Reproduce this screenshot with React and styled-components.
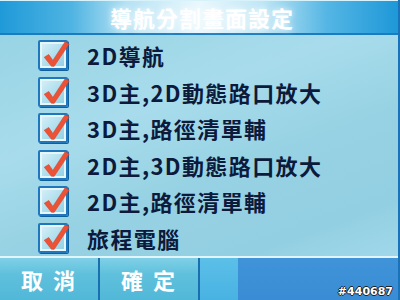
import React from "react";
import styled, { createGlobalStyle } from "styled-components";

const Global = createGlobalStyle`
  html, body { margin: 0; padding: 0; width: 400px; height: 300px; overflow: hidden; background: #3a8fd4; }
  * { box-sizing: border-box; }
`;

const Screen = styled.div`
  width: 400px;
  height: 300px;
  display: flex;
  flex-direction: column;
  border-right: 2px solid #1a72b8;
  font-family: "Noto Sans CJK TC", "Noto Sans CJK SC", sans-serif;
`;

const TitleBar = styled.div`
  height: 35px;
  flex: none;
  display: flex;
  align-items: center;
  justify-content: center;
  color: #ffffff;
  font-size: 22px;
  font-weight: 700;
  letter-spacing: 1px;
  padding-left: 6px;
  border-top: 1px solid #d8f2fb;
  border-bottom: 2px solid #1a7cc0;
  background: linear-gradient(
    90deg,
    #1f9ad8 0%,
    #4fb4e2 18%,
    #b6e2f4 32%,
    #eaf8fd 50%,
    #bfe6f5 66%,
    #55b6e4 82%,
    #1e98d8 100%
  );
  text-shadow: 0 0 6px rgba(255, 255, 255, 0.9);
`;

const List = styled.div`
  flex: none;
  height: 223px;
  padding-top: 2px;
  display: flex;
  flex-direction: column;
  border-bottom: 2px solid #e2f5fb;
  background: linear-gradient(
    160deg,
    #98d4e4 0%,
    #a8dcec 35%,
    #96d2e3 60%,
    #93cfe2 85%,
    #a0d8ea 100%
  );
`;

const Row = styled.div`
  height: 36.5px;
  display: flex;
  align-items: center;
  gap: 19px;
  padding-left: 38px;
`;

const Box = styled.div`
  position: relative;
  width: 30px;
  height: 30px;
  flex: none;
  border: 2px solid #1f78bd;
  border-radius: 2px;
  box-shadow: inset 0 0 0 2px #e6f7fc, 1px 1px 0 #0f5f9c;
  background: linear-gradient(135deg, #d9f1f9 0%, #a9dcec 60%, #8fcfe4 100%);
`;

const Mark = styled.svg`
  position: absolute;
  left: 2px;
  top: -2px;
  width: 28px;
  height: 29px;
  overflow: visible;
`;

const Label = styled.span`
  color: #0c1a3c;
  font-size: 22px;
  font-weight: 700;
  letter-spacing: 1.4px;
  line-height: 1;
  white-space: nowrap;
`;

const BottomBar = styled.div`
  flex: 1;
  display: flex;
  position: relative;
`;

const SoftKey = styled.div`
  width: 100px;
  display: flex;
  align-items: center;
  justify-content: center;
  color: #ffffff;
  font-size: 22px;
  font-weight: 700;
  letter-spacing: 10px;
  padding-left: 8px;
  border-right: 2px solid #1a6fb0;
  background: linear-gradient(180deg, #7fd0e6 0%, #5ec0dc 40%, #52b8d8 100%);
`;

const Filler = styled.div`
  width: ${(p) => (p.$grow ? "auto" : "38px")};
  flex: ${(p) => (p.$grow ? 1 : "none")};
  background: ${(p) =>
    p.$grow
      ? "linear-gradient(180deg, #3f93d8 0%, #3a8dd4 100%)"
      : "linear-gradient(180deg, #5cc0e8 0%, #48b2e2 100%)"};
`;

const Watermark = styled.span`
  position: absolute;
  right: 5px;
  bottom: 2px;
  color: #ffffff;
  font-family: "DejaVu Sans", sans-serif;
  font-size: 11px;
  font-weight: 700;
  text-shadow: 1px 0 0 #222, -1px 0 0 #222, 0 1px 0 #222, 0 -1px 0 #222;
`;

const items = [
  "2D導航",
  "3D主,2D動態路口放大",
  "3D主,路徑清單輔",
  "2D主,3D動態路口放大",
  "2D主,路徑清單輔",
  "旅程電腦",
];

function CheckBox() {
  return (
    <Box>
      <Mark viewBox="0 0 30 32">
        <path
          d="M2 19 L7 16 L11.5 22.5 L25 2 L29.5 4.5 L13 29 L10 29 Z"
          fill="#ec5236"
          stroke="#d23f26"
          strokeWidth="0.6"
          strokeLinejoin="round"
        />
      </Mark>
    </Box>
  );
}

export default function App() {
  return (
    <>
      <Global />
      <Screen>
        <TitleBar>導航分割畫面設定</TitleBar>
        <List>
          {items.map((t) => (
            <Row key={t}>
              <CheckBox />
              <Label>{t}</Label>
            </Row>
          ))}
        </List>
        <BottomBar>
          <SoftKey>取消</SoftKey>
          <SoftKey>確定</SoftKey>
          <Filler />
          <Filler $grow />
          <Watermark>#440687</Watermark>
        </BottomBar>
      </Screen>
    </>
  );
}
